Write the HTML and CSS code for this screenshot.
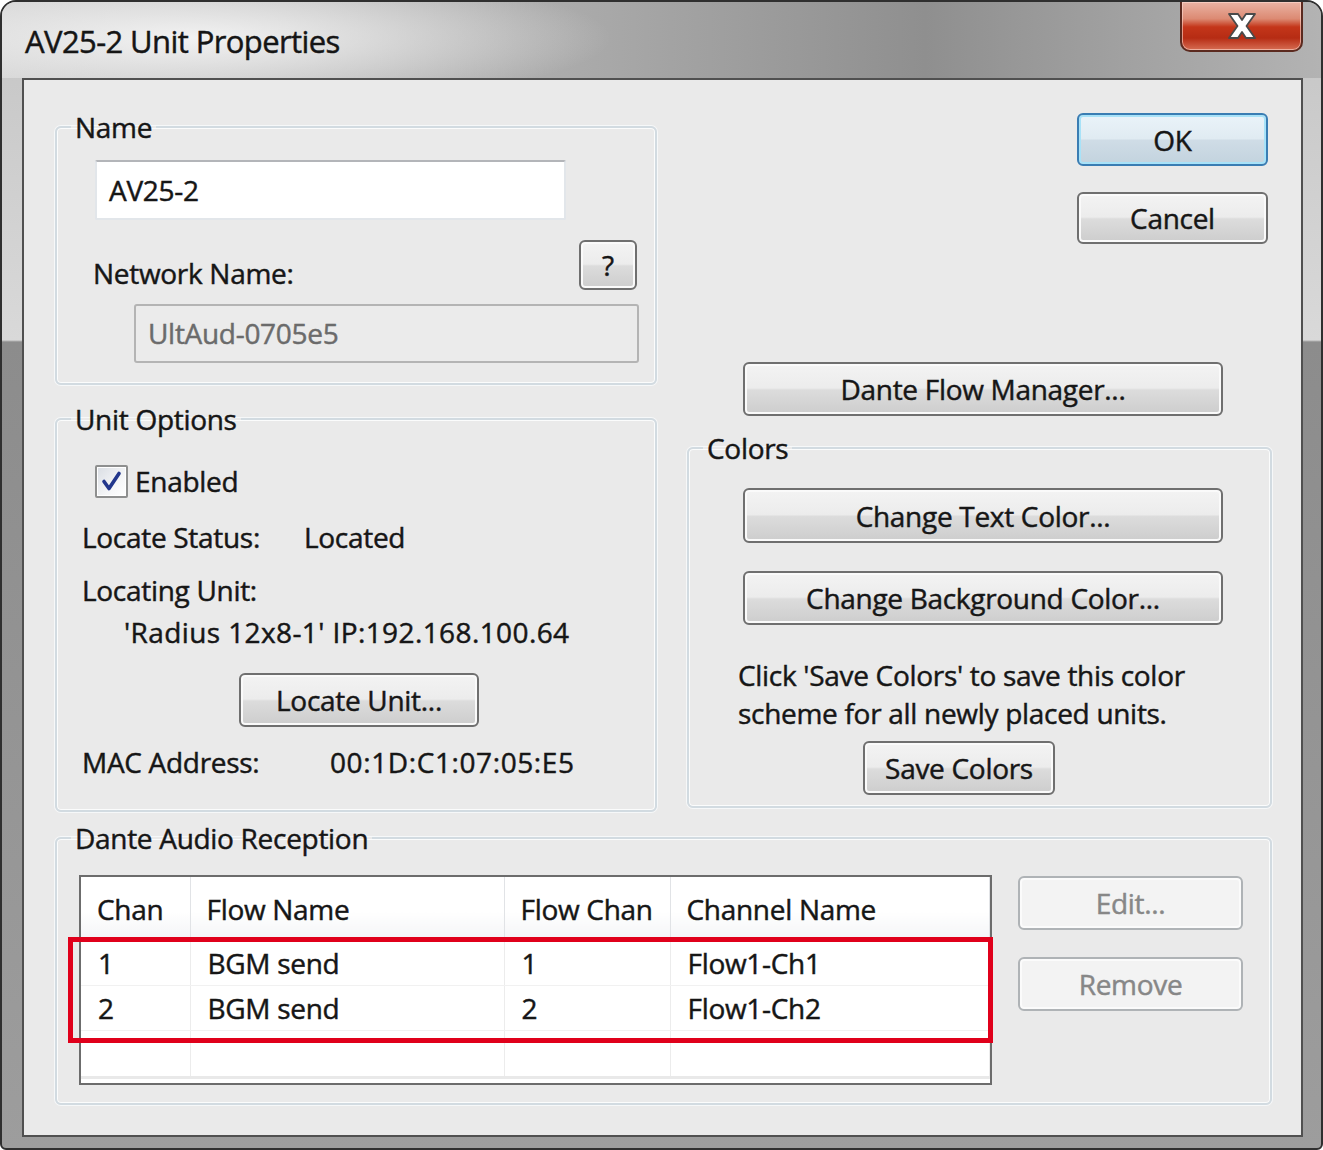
FILE: index.html
```html
<!DOCTYPE html>
<html>
<head>
  <title>AV25-2 Unit Properties</title>
  <link rel="stylesheet" href="styles.css">
</head>
<body>
  <div class="window">
    <div class="titlebar">
      <span class="title">AV25-2 Unit Properties</span>
      <button class="close-btn" aria-label="Close">
        <svg width="38" height="28" viewBox="0 0 38 28">
          <path d="M6 2 h9 l4 6 l4 -6 h9 l-8.5 12 l8.5 12 h-9 l-4 -6 l-4 6 h-9 l8.5 -12 z" fill="#fff" stroke="#4a4a4a" stroke-width="1.8" stroke-linejoin="round"/>
        </svg>
      </button>
    </div>

    <div class="client">
      <div class="top-area">
        <div class="left-col">
          <fieldset class="group name-group">
            <legend>Name</legend>
            <div class="name-body">
              <div class="text-field">AV25-2</div>
              <div class="netname-row">
                <span>Network Name:</span>
                <button class="btn help-btn">?</button>
              </div>
              <div class="readonly-field">UltAud-0705e5</div>
            </div>
          </fieldset>

          <fieldset class="group options-group">
            <legend>Unit Options</legend>
            <div class="options-body">
              <label class="check-row">
                <span class="checkbox">
                  <svg width="29" height="29" viewBox="0 0 29 29">
                    <path d="M7 14.5 l5 7 l10 -15" fill="none" stroke="#22368c" stroke-width="3.6" stroke-linecap="round" stroke-linejoin="round"/>
                  </svg>
                </span>
                Enabled
              </label>
              <div class="info-row status-row"><span class="info-label status-label">Locate Status:</span><span>Located</span></div>
              <div class="info-row locating-row">Locating Unit:</div>
              <div class="info-row ip-row">'Radius 12x8-1' IP:192.168.100.64</div>
              <button class="btn locate-btn">Locate Unit...</button>
              <div class="info-row mac-row"><span class="info-label mac-label">MAC Address:</span><span class="mac-value">00:1D:C1:07:05:E5</span></div>
            </div>
          </fieldset>
        </div>

        <div class="right-col">
          <div class="dialog-buttons">
            <button class="btn ok-btn">OK</button>
            <button class="btn cancel-btn">Cancel</button>
          </div>
          <button class="btn wide-btn flow-btn">Dante Flow Manager...</button>

          <fieldset class="group colors-group">
            <legend>Colors</legend>
            <div class="colors-body">
              <button class="btn wide-btn text-color-btn">Change Text Color...</button>
              <button class="btn wide-btn bg-color-btn">Change Background Color...</button>
              <p class="colors-note">Click 'Save Colors' to save this color<br>scheme for all newly placed units.</p>
              <button class="btn save-btn">Save Colors</button>
            </div>
          </fieldset>
        </div>
      </div>

      <fieldset class="group reception-group">
        <legend>Dante Audio Reception</legend>
        <div class="reception-body">
          <div class="list-wrap">
            <table class="list">
              <colgroup>
                <col style="width: 109px">
                <col style="width: 314px">
                <col style="width: 166px">
                <col>
              </colgroup>
              <thead>
                <tr><th>Chan</th><th>Flow Name</th><th>Flow Chan</th><th>Channel Name</th></tr>
              </thead>
              <tbody>
                <tr><td>1</td><td>BGM send</td><td>1</td><td>Flow1-Ch1</td></tr>
                <tr><td>2</td><td>BGM send</td><td>2</td><td>Flow1-Ch2</td></tr>
                <tr class="empty-row"><td></td><td></td><td></td><td></td></tr>
              </tbody>
            </table>
            <div class="highlight"></div>
          </div>
          <div class="side-buttons">
            <button class="btn side-btn" disabled>Edit...</button>
            <button class="btn side-btn" disabled>Remove</button>
          </div>
        </div>
      </fieldset>
    </div>
  </div>
</body>
</html>
```

FILE: styles.css
```css
body {
  margin: 0;
  font-family: "Open Sans", "Noto Sans", sans-serif;
  font-size: 28px;
  letter-spacing: -0.3px;
  line-height: 34px;
  color: #161616;
  -webkit-text-stroke: 0.45px currentColor;
  background: #ffffff;
}

.window {
  width: 1323px;
  height: 1150px;
  box-sizing: border-box;
  border: 2px solid #2f2f2f;
  border-radius: 16px 16px 6px 6px;
  background: linear-gradient(to bottom, #c4c4c4 0, #d9d9d9 338px, #8c8c8c 340px, #9d9d9d 100%);
  display: flex;
  flex-direction: column;
  overflow: hidden;
}

.titlebar {
  height: 76px;
  flex: none;
  display: flex;
  justify-content: space-between;
  align-items: flex-start;
  background:
    radial-gradient(ellipse 420px 70px at 190px 36px, rgba(245, 245, 245, 0.95), rgba(245, 245, 245, 0) 100%),
    linear-gradient(to right, #cfcfcf 0, #a9a9a9 45%, #8f8f8f 70%, #b3b3b3 100%);
}

.title {
  font-size: 31px;
  letter-spacing: -0.6px;
  line-height: 40px;
  padding: 19px 0 0 23px;
  color: #151515;
}

.close-btn {
  width: 123px;
  height: 50px;
  margin-right: 18px;
  padding: 0;
  border: 2px solid #5b2a1f;
  border-top: none;
  border-radius: 0 0 10px 10px;
  background: linear-gradient(to bottom, #eab3a4 0, #dc8a73 35%, #c4361a 52%, #b62c14 75%, #d66c52 100%);
  box-shadow: inset 0 0 0 1px rgba(255, 220, 210, 0.6);
  display: flex;
  align-items: center;
  justify-content: center;
}

.client {
  flex: 1;
  margin: 0 18px 11px 20px;
  border: 2px solid #505050;
  background: #eaeaea;
  padding: 33px 29px 0 31px;
}

.top-area {
  display: grid;
  grid-template-columns: 602px 585px;
  column-gap: 30px;
  align-items: start;
}

.left-col,
.right-col {
  display: flex;
  flex-direction: column;
}

/* group boxes */
.group {
  margin: 0;
  padding: 0;
  border: 2px solid #d2dbe1;
  border-radius: 6px;
  box-shadow: inset 0 0 0 1px #fbfcfc, 0 0 0 1px #f6f8f9;
  min-width: 0;
}

.group legend {
  margin-left: 14px;
  padding: 0 4px;
  line-height: 28px;
}

.options-group {
  margin-top: 20px;
}

.colors-group {
  margin-top: 18px;
}

.reception-group {
  margin-top: 12px;
}

/* buttons */
.btn {
  font: inherit;
  letter-spacing: inherit;
  color: #161616;
  box-sizing: border-box;
  border: 2px solid #6f6f6f;
  border-radius: 6px;
  background: linear-gradient(to bottom, #f3f3f3 0, #ececec 48%, #dcdcdc 52%, #cdcdcd 100%);
  box-shadow: inset 0 0 0 2px #fafafa;
  padding: 0;
  text-align: center;
}

.btn:disabled {
  color: #878787;
  border-color: #afb3b6;
  background: #f3f3f3;
  box-shadow: inset 0 0 0 2px #fbfbfb;
}

/* name group */
.name-body {
  padding: 19px 16px 20px 36px;
}

.text-field {
  width: 471px;
  height: 60px;
  box-sizing: border-box;
  margin-left: 2px;
  padding-left: 12px;
  line-height: 56px;
  background: #ffffff;
  border: 2px solid #e2e6ea;
  border-top-color: #b3b5b9;
  border-radius: 2px;
}

.netname-row {
  margin-top: 20px;
  height: 50px;
  display: flex;
  justify-content: space-between;
  align-items: flex-end;
}

.help-btn {
  width: 58px;
  height: 50px;
  margin-right: 2px;
}

.readonly-field {
  width: 505px;
  height: 59px;
  box-sizing: border-box;
  margin: 14px 0 0 41px;
  padding-left: 12px;
  line-height: 54px;
  color: #6b6b6b;
  background: #ebebeb;
  border: 2px solid #b4b4b4;
  border-radius: 3px;
}

/* unit options group */
.options-body {
  padding: 31px 0 31px 25px;
  display: flex;
  flex-direction: column;
  align-items: flex-start;
}

.check-row {
  margin-left: 13px;
  height: 34px;
  display: flex;
  align-items: center;
  gap: 7px;
}

.checkbox {
  width: 33px;
  height: 33px;
  box-sizing: border-box;
  border: 2px solid #8e8f8f;
  border-radius: 2px;
  background: linear-gradient(135deg, #d9dde3 0, #f4f5f7 60%, #ffffff 100%);
  box-shadow: inset 0 0 0 1px #ffffff;
  display: flex;
  align-items: center;
  justify-content: center;
}

.info-row {
  height: 34px;
  display: flex;
}

.status-row { margin-top: 22px; }
.locating-row { margin-top: 19px; }
.ip-row { margin-top: 8px; padding-left: 42px; letter-spacing: 0.4px; }
.mac-row { margin-top: 18px; }

.status-label { width: 222px; }
.mac-label { width: 248px; }
.mac-value { letter-spacing: 0.6px; }

.locate-btn {
  margin: 24px 0 0 157px;
  width: 240px;
  height: 54px;
}

/* right column */
.dialog-buttons {
  align-self: flex-end;
  margin-right: 4px;
  display: flex;
  flex-direction: column;
}

.ok-btn,
.cancel-btn {
  width: 191px;
}

.ok-btn {
  height: 53px;
  border-color: #3a7db3;
  background: linear-gradient(to bottom, #eaf3f9 0, #e0ebf2 48%, #cfdce6 52%, #c3d3de 100%);
  box-shadow: inset 0 0 0 2px #a8e2f8;
}

.cancel-btn {
  height: 52px;
  margin-top: 26px;
}

.wide-btn {
  width: 480px;
  height: 54px;
}

.flow-btn {
  margin: 118px 0 0 56px;
}

.colors-body {
  padding: 26px 0 11px 54px;
  display: flex;
  flex-direction: column;
  align-items: flex-start;
}

.text-color-btn {
  height: 55px;
}

.bg-color-btn {
  margin-top: 28px;
}

.colors-note {
  margin: 31px 0 0 -5px;
  line-height: 38px;
}

.save-btn {
  margin: 9px 0 0 120px;
  width: 192px;
  height: 54px;
}

/* reception group */
.reception-body {
  padding: 23px 0 18px 22px;
  display: flex;
  gap: 26px;
}

.list-wrap {
  position: relative;
  width: 913px;
  height: 210px;
  box-sizing: border-box;
  border: 2px solid #6c6c6c;
  background: #ffffff;
}

.list {
  width: 100%;
  border-collapse: collapse;
  table-layout: fixed;
}

.list th {
  height: 63px;
  padding: 0 0 0 16px;
  text-align: left;
  font-weight: normal;
  background: linear-gradient(to bottom, #ffffff 0, #ffffff 55%, #f3f4f6 100%);
  border-right: 1px solid #e1e3e6;
  border-bottom: 1px solid #e3e5e8;
}

.list td {
  height: 44px;
  padding: 0 0 0 17px;
  border-right: 1px solid #ececec;
  border-bottom: 1px solid #f1f1f1;
}

.list .empty-row td {
  height: 45px;
  border-bottom: 3px solid #e9e9e9;
}

.highlight {
  position: absolute;
  left: -13px;
  top: 60px;
  width: 925px;
  height: 106px;
  box-sizing: border-box;
  border: 5px solid #e0001b;
}

.side-buttons {
  padding-top: 1px;
  display: flex;
  flex-direction: column;
  gap: 27px;
}

.side-btn {
  width: 225px;
  height: 54px;
}
```
